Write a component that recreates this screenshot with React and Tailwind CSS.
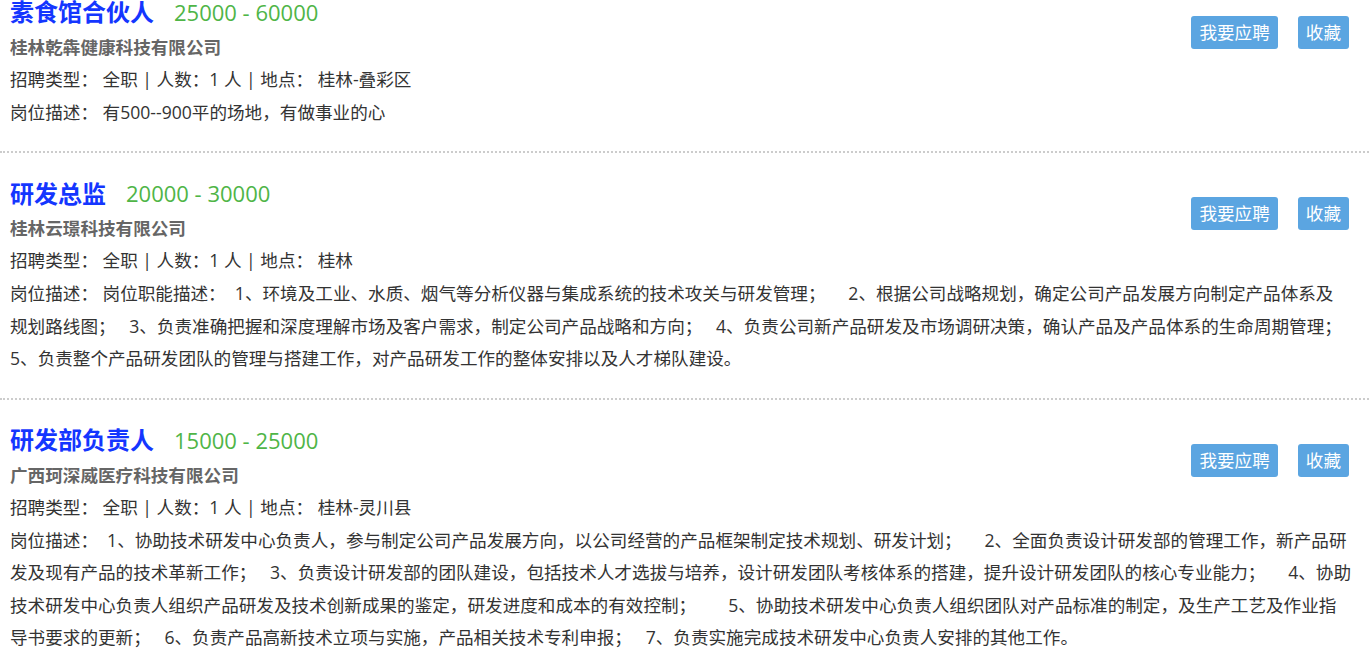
const jobs = [
  {
    title: '素食馆合伙人',
    salary: '25000 - 60000',
    company: '桂林乾犇健康科技有限公司',
    location: '桂林-叠彩区',
    desc: ' 有500--900平的场地，有做事业的心',
  },
  {
    title: '研发总监',
    salary: '20000 - 30000',
    company: '桂林云璟科技有限公司',
    location: '桂林',
    desc:
      ' 岗位职能描述：  1、环境及工业、水质、烟气等分析仪器与集成系统的技术攻关与研发管理；     2、根据公司战略规划，确定公司产品发展方向制定产品体系及\n' +
      '规划路线图；   3、负责准确把握和深度理解市场及客户需求，制定公司产品战略和方向；   4、负责公司新产品研发及市场调研决策，确认产品及产品体系的生命周期管理；\n' +
      '5、负责整个产品研发团队的管理与搭建工作，对产品研发工作的整体安排以及人才梯队建设。',
  },
  {
    title: '研发部负责人',
    salary: '15000 - 25000',
    company: '广西珂深威医疗科技有限公司',
    location: '桂林-灵川县',
    desc:
      '  1、协助技术研发中心负责人，参与制定公司产品发展方向，以公司经营的产品框架制定技术规划、研发计划；     2、全面负责设计研发部的管理工作，新产品研\n' +
      '发及现有产品的技术革新工作；   3、负责设计研发部的团队建设，包括技术人才选拔与培养，设计研发团队考核体系的搭建，提升设计研发团队的核心专业能力；     4、协助\n' +
      '技术研发中心负责人组织产品研发及技术创新成果的鉴定，研发进度和成本的有效控制；       5、协助技术研发中心负责人组织团队对产品标准的制定，及生产工艺及作业指\n' +
      '导书要求的更新；   6、负责产品高新技术立项与实施，产品相关技术专利申报；   7、负责实施完成技术研发中心负责人安排的其他工作。',
  },
];

function JobItem({ job }) {
  return (
    <div className="border-b-2 border-dotted border-[#cccccc] pt-[21px] pb-[23px] pl-[10px] pr-[12px]">
      <div className="float-right mt-[23px] mr-[8px] flex gap-[20px]">
        <button className="h-[33px] rounded-[3px] bg-[#5ba5e1] px-[8px] text-[17.6px] text-white">
          我要应聘
        </button>
        <button className="h-[33px] rounded-[3px] bg-[#5ba5e1] px-[8px] text-[17.6px] text-white">
          收藏
        </button>
      </div>
      <div className="flex h-[39px] items-center">
        <span className="text-[24px] font-bold text-[#1436ff]">{job.title}</span>
        <span className="ml-[20px] text-[22px] text-[#4fb547]">{job.salary}</span>
      </div>
      <div className="h-[31px] text-[17.6px] leading-[31px] font-bold text-[#666666]">{job.company}</div>
      <div className="h-[33px] text-[17.6px] leading-[33px] text-[#333333]">
        招聘类型： 全职 | 人数：1 人 | 地点： {job.location}
      </div>
      <p className="whitespace-pre-wrap text-[17.6px] leading-[32.5px] text-[#333333]">岗位描述：{job.desc}</p>
    </div>
  );
}

export default function App() {
  return (
    <div
      className="min-h-screen overflow-hidden bg-white"
      style={{ fontFamily: '"Open Sans", "Noto Sans CJK SC", sans-serif' }}
    >
      <div className="-mt-[28.5px]">
        {jobs.map((job) => (
          <JobItem key={job.title} job={job} />
        ))}
      </div>
    </div>
  );
}
